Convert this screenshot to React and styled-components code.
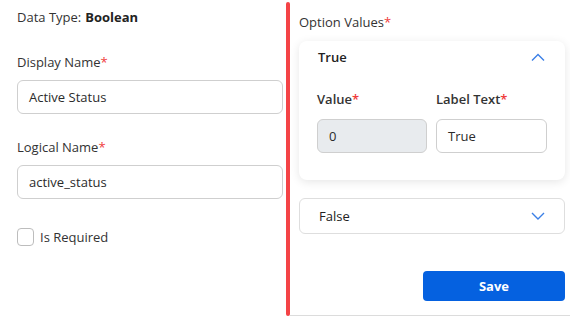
import React from 'react';
import styled, { createGlobalStyle } from 'styled-components';

const GlobalStyle = createGlobalStyle`
	body {
		margin: 0;
		background: #fff;
		font-family: 'Open Sans', 'Noto Sans', sans-serif;
		color: #2b2b2b;
	}
`;

const Page = styled.div`
	display: flex;
	width: 570px;
	height: 316px;
`;

const LeftPane = styled.div`
	flex: 0 0 286px;
	box-sizing: border-box;
	padding: 8px 3px 0 17px;
	display: flex;
	flex-direction: column;
`;

const Divider = styled.div`
	flex: 0 0 4px;
	margin-top: 2px;
	height: 314px;
	border-radius: 2px;
	background: #f44346;
`;

const RightPane = styled.div`
	flex: 1;
	min-width: 0;
	padding: 13px 5px 0 9px;
	border-bottom: 1px solid #dcdcdc;
	display: flex;
	flex-direction: column;
`;

const DataType = styled.div`
	font-size: 13px;
	line-height: 18px;
	color: #333;
	b {
		font-weight: 700;
		color: #222;
		margin-left: 4px;
	}
`;

const Label = styled.label`
	display: block;
	font-size: 13px;
	line-height: 18px;
	color: #333;
	font-weight: ${(p) => (p.strong ? 600 : 400)};
	margin-top: ${(p) => p.top || 0}px;
	margin-bottom: ${(p) => p.gap || 9}px;
	span {
		color: #ef3b3b;
	}
`;

const Input = styled.div`
	box-sizing: border-box;
	height: 34px;
	border: 1px solid #cfcfcf;
	border-radius: 6px;
	background: ${(p) => (p.disabled ? '#e8ebee' : '#fff')};
	padding: 0 11px;
	display: flex;
	align-items: center;
	font-size: 13px;
	color: #2b2b2b;
`;

const CheckRow = styled.div`
	display: flex;
	align-items: center;
	gap: 6px;
	margin-top: 29px;
	font-size: 13px;
	color: #333;
`;

const Checkbox = styled.div`
	box-sizing: border-box;
	width: 17px;
	height: 18px;
	border: 1px solid #bdbdbd;
	border-radius: 4px;
`;

const Card = styled.div`
	margin-top: 1px;
	border-radius: 8px;
	background: #fff;
	box-shadow: 0 2px 10px rgba(0, 0, 0, 0.1);
	padding: 7px 20px 27px 18px;
`;

const CardHeader = styled.div`
	display: flex;
	justify-content: space-between;
	align-items: center;
	height: 18px;
	font-size: 13px;
	font-weight: 600;
	color: #222;
	padding-left: 1px;
	margin-bottom: 24px;
`;

const Fields = styled.div`
	display: grid;
	grid-template-columns: 110px 111px;
	column-gap: 9px;
`;

const Collapsed = styled.div`
	box-sizing: border-box;
	margin-top: 18px;
	height: 36px;
	border: 1px solid #dedede;
	border-radius: 6px;
	display: flex;
	justify-content: space-between;
	align-items: center;
	padding: 0 19px;
	font-size: 13px;
	color: #222;
`;

const Footer = styled.div`
	display: flex;
	justify-content: flex-end;
	margin-top: 37px;
`;

const SaveButton = styled.button`
	width: 142px;
	height: 30px;
	border: 0;
	border-radius: 4px;
	background: #0561e0;
	color: #fff;
	font-family: inherit;
	font-size: 13px;
	font-weight: 700;
`;

const Chevron = ({ up }) => (
	<svg width="14" height="8" viewBox="0 0 14 8">
		<polyline
			points={up ? '1,7.5 7,1.5 13,7.5' : '1,1 7,7 13,1'}
			fill="none"
			stroke="#3b7fe6"
			strokeWidth="1.4"
		/>
	</svg>
);

function App() {
	return (
		<>
			<GlobalStyle />
			<Page>
				<LeftPane>
					<DataType>
						Data Type:<b>Boolean</b>
					</DataType>
					<Label top={27}>
						Display Name<span>*</span>
					</Label>
					<Input>Active Status</Input>
					<Label top={24}>
						Logical Name<span>*</span>
					</Label>
					<Input>active_status</Input>
					<CheckRow>
						<Checkbox />
						Is Required
					</CheckRow>
				</LeftPane>
				<Divider />
				<RightPane>
					<Label>
						Option Values<span>*</span>
					</Label>
					<Card>
						<CardHeader>
							True
							<Chevron up />
						</CardHeader>
						<Fields>
							<div>
								<Label strong gap={11}>
									Value<span>*</span>
								</Label>
								<Input disabled>0</Input>
							</div>
							<div>
								<Label strong gap={11}>
									Label Text<span>*</span>
								</Label>
								<Input>True</Input>
							</div>
						</Fields>
					</Card>
					<Collapsed>
						False
						<Chevron />
					</Collapsed>
					<Footer>
						<SaveButton>Save</SaveButton>
					</Footer>
				</RightPane>
			</Page>
		</>
	);
}

export default App;
